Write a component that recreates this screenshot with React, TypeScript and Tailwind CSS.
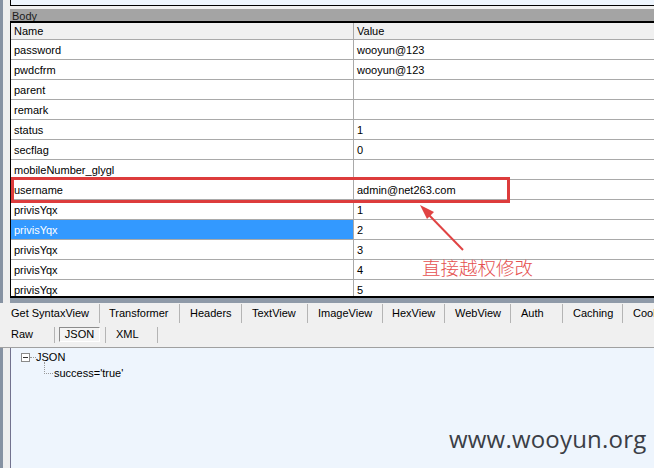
import React from "react";

type Row = { name: string; value: string; selected?: boolean };

const rows: Row[] = [
  { name: "password", value: "wooyun@123" },
  { name: "pwdcfrm", value: "wooyun@123" },
  { name: "parent", value: "" },
  { name: "remark", value: "" },
  { name: "status", value: "1" },
  { name: "secflag", value: "0" },
  { name: "mobileNumber_glygl", value: "" },
  { name: "username", value: "admin@net263.com" },
  { name: "privisYqx", value: "1" },
  { name: "privisYqx", value: "2", selected: true },
  { name: "privisYqx", value: "3" },
  { name: "privisYqx", value: "4" },
  { name: "privisYqx", value: "5" },
];

const tabs = [
  { label: "Get SyntaxView", cls: "w-[90px] pl-[1px]" },
  { label: "Transformer", cls: "w-[80px] pl-[9px]" },
  { label: "Headers", cls: "w-[62px] pl-[10px]" },
  { label: "TextView", cls: "w-[66px] pl-[10px]" },
  { label: "ImageView", cls: "w-[75px] pl-[10px]" },
  { label: "HexView", cls: "w-[62px] pl-[9px]" },
  { label: "WebView", cls: "w-[66px] pl-[10px]" },
  { label: "Auth", cls: "w-[52px] pl-[10px]" },
  { label: "Caching", cls: "w-[60px] pl-[10px]" },
];

function App() {
  return (
    <div className="relative flex w-[654px] h-[468px] overflow-hidden bg-[#f0f0f0] font-['Liberation_Sans',Arial,sans-serif] text-[11px] text-black">
      {/* left window edge */}
      <div className="w-[3px] shrink-0 bg-[#8692a2]" />
      <div className="w-[7px] shrink-0 bg-[#eeeeee]" />

      <div className="flex flex-col flex-1 min-w-0">
        <div className="h-[6px] bg-[#eef5fd] border-l border-b border-black" />
        <div className="h-[3px]" />
        <div className="h-[14px] overflow-hidden bg-[#a4a4a4] border-b-2 border-black pl-[2px] leading-[14px] text-[#1c1c1c]">
          Body
        </div>

        {/* body table */}
        <div className="h-[273px] overflow-hidden bg-white border-l border-black">
          <div className="flex h-[17px] bg-[#f0f0f0] border-b border-[#a9a9a9] leading-[16px]">
            <div className="w-[343px] pl-[3px] border-r border-[#a9a9a9]">Name</div>
            <div className="flex-1 pl-[3px]">Value</div>
          </div>
          {rows.map((r, i) => (
            <div key={i} className="flex h-[20px] border-b border-[#a9a9a9] leading-[21px]">
              <div
                className={
                  r.selected
                    ? "w-[343px] pl-[3px] border-r border-[#a9a9a9] bg-[#3399ff] text-white"
                    : "w-[343px] pl-[3px] border-r border-[#a9a9a9]"
                }
              >
                {r.name}
              </div>
              <div className="flex-1 pl-[3px]">{r.value}</div>
            </div>
          ))}
        </div>
        <div className="h-[2px] bg-black" />
        <div className="h-[5px] bg-[#8f9aa8]" />

        {/* response tabs */}
        <div className="h-[45px] border-b border-[#a0a0a0] bg-[#f0f0f0] -ml-[10px] pl-[10px]">
          <div className="flex h-[20px] items-start">
            {tabs.map((t) => (
              <div key={t.label} className={`${t.cls} h-[20px] shrink-0 flex items-center`}>
                <span className="flex-1 whitespace-nowrap">{t.label}</span>
                <span className="w-px h-[19px] bg-[#b4b4b4]" />
              </div>
            ))}
            <div className="pl-[10px] h-[20px] flex items-center whitespace-nowrap">Cookies</div>
          </div>
          <div className="flex h-[23px] items-center">
            <div className="w-[44px] pl-[1px]">Raw</div>
            <span className="w-px h-[16px] bg-[#b4b4b4]" />
            <div className="ml-[4px] w-[41px] h-[15px] border border-[#8c8c8c] border-r-white border-b-white bg-[#f4f4f4] flex items-center justify-center leading-none">
              JSON
            </div>
            <span className="ml-[5px] w-px h-[16px] bg-[#b4b4b4]" />
            <div className="w-[51px] pl-[10px]">XML</div>
            <span className="w-px h-[16px] bg-[#b4b4b4]" />
          </div>
        </div>

        {/* json tree */}
        <div className="flex-1 bg-[#eef5fd] border-l border-[#72728e] pt-[1px]">
          <div className="flex items-center h-[16px] pl-[10px]">
            <span className="w-[9px] h-[9px] border border-[#8a8a8a] bg-white flex items-center justify-center">
              <span className="w-[5px] h-px bg-[#333]" />
            </span>
            <span className="w-[6px] border-t border-dotted border-[#999]" />
            <span>JSON</span>
          </div>
          <div className="flex items-end h-[16px] pl-[33px]">
            <span className="w-[9px] h-[12px] mb-[7px] border-l border-b border-dotted border-[#999]" />
            <span className="pl-[1px]">success='true'</span>
          </div>
        </div>
      </div>

      {/* annotations */}
      <div className="absolute left-[11px] top-[177px] w-[499px] h-[26px] border-[3px] border-[#dd3c3c]" />
      <svg className="absolute left-0 top-0" width="654" height="468">
        <line x1="463" y1="250" x2="428" y2="214" stroke="#e04444" strokeWidth="2" />
        <polygon points="420,205 434,212 427,219" fill="#e04444" />
      </svg>
      <div className="absolute left-[422px] top-[255px] text-[18.5px] leading-[24px] text-[#e55050] font-['Noto_Sans_CJK_SC',sans-serif] font-light">
        直接越权修改
      </div>
      <div className="absolute left-[449px] top-[421px] text-[24px] leading-[36px] tracking-[0.2px] text-[#3b3e46] font-['Open_Sans',sans-serif]">
        www.wooyun.org
      </div>
    </div>
  );
}

export default App;
